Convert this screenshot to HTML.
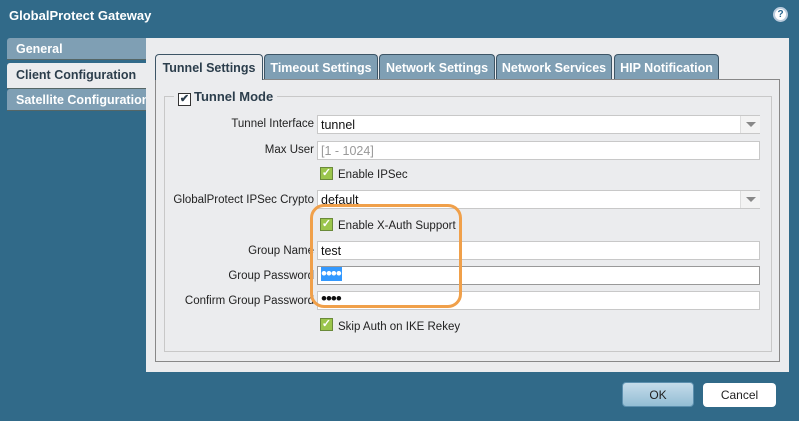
<html><head><style>
body{margin:0;width:799px;height:421px;background:#316a89;font-family:"Liberation Sans",sans-serif;position:relative;overflow:hidden;font-size:12px;white-space:nowrap}
.a{position:absolute}
.title{left:9px;top:8px;color:#fff;font-weight:bold;font-size:13px}
.side{left:7px;width:139px;height:22px;background:#7f9fb4;color:#fff;font-weight:bold;font-size:12.5px;line-height:22px;padding-left:9px;box-sizing:border-box;border-radius:3px 0 0 0;border-bottom:1px solid #566;overflow:hidden}
.tab{top:54px;height:25px;background:#7f9fb4;color:#fff;font-weight:bold;font-size:12.5px;line-height:26px;text-align:center;border:1px solid #3d5566;border-bottom:none;border-radius:4px 4px 0 0;box-sizing:border-box}
.lbl{right:485px;color:#222;font-size:11.5px;text-align:right}
.in{left:317px;width:443px;height:19px;background:#fff;border:1px solid #c8c8c8;box-sizing:border-box;padding-left:3px;line-height:18px;font-size:12.5px;color:#111}
.cb{width:13px;height:13px;background:#9bc54c;border:1px solid #6a8a3a;box-sizing:border-box;color:#fff;font-size:11px;line-height:11px;text-align:center;font-weight:bold}
.ct{color:#222;font-size:11.5px}
.dots{font-size:17px;line-height:14px;letter-spacing:-1px;display:inline-block;padding-right:1px}
</style></head><body>
<div class="a title">GlobalProtect Gateway</div>
<div class="a" style="left:773px;top:7px;width:15px;height:15px;border-radius:50%;background:#fff;border:2px solid #bcd;box-sizing:border-box;color:#2a6790;font-weight:bold;font-size:10px;text-align:center;line-height:11px">?</div>
<div class="a" style="left:146px;top:38px;width:643px;height:334px;background:#ebecee"></div>
<div class="a side" style="top:38px">General</div>
<div class="a side" style="top:63px;background:#ebecee;color:#2c3e4c;height:26px;line-height:24px">Client Configuration</div>
<div class="a side" style="top:89px">Satellite Configuration</div>
<div class="a" style="left:155px;top:79px;width:625px;height:283px;border:1px solid #888;background:#ebecee;box-sizing:border-box"></div>
<div class="a tab" style="left:155px;width:108px;background:#ebecee;color:#2c3e4c;height:26px">Tunnel Settings</div>
<div class="a tab" style="left:264px;width:114px">Timeout Settings</div>
<div class="a tab" style="left:379px;width:116px">Network Settings</div>
<div class="a tab" style="left:496px;width:116px">Network Services</div>
<div class="a tab" style="left:614px;width:105px">HIP Notification</div>
<div class="a" style="left:164px;top:96px;width:608px;height:256px;border:1px solid #c8c8c8;box-sizing:border-box"></div>
<div class="a" style="left:174px;top:88px;background:#ebecee;padding:0 4px;font-weight:bold;font-size:13px;color:#2c3e4c;line-height:17px"><span style="display:inline-block;width:11px;height:11px;border:1px solid #333;background:#fff;font-size:11px;line-height:10px;text-align:center;vertical-align:-1px;margin-right:3px">✔</span>Tunnel Mode</div>
<div class="a lbl" style="top:118px">Tunnel Interface</div>
<div class="a in" style="top:115px">tunnel</div>
<div class="a" style="left:740px;top:116px;width:19px;height:17px;background:#f3f3f3;border-left:1px solid #ddd"><div style="margin:6px 0 0 5px;width:0;height:0;border-left:5px solid transparent;border-right:5px solid transparent;border-top:5px solid #888"></div></div>
<div class="a lbl" style="top:144px">Max User</div>
<div class="a in" style="top:141px;color:#999">[1 - 1024]</div>
<div class="a cb" style="left:320px;top:167px">✓</div><div class="a ct" style="left:338px;top:169px">Enable IPSec</div>
<div class="a lbl" style="top:194px">GlobalProtect IPSec Crypto</div>
<div class="a in" style="top:190px">default</div>
<div class="a" style="left:740px;top:191px;width:19px;height:17px;background:#f3f3f3;border-left:1px solid #ddd"><div style="margin:6px 0 0 5px;width:0;height:0;border-left:5px solid transparent;border-right:5px solid transparent;border-top:5px solid #888"></div></div>
<div class="a cb" style="left:320px;top:218px">✓</div><div class="a ct" style="left:338px;top:220px">Enable X-Auth Support</div>
<div class="a lbl" style="top:245px">Group Name</div>
<div class="a in" style="top:241px">test</div>
<div class="a lbl" style="top:270px">Group Password</div>
<div class="a in" style="top:266px;border-color:#999"><span class="dots" style="background:#3399ff;color:#fff">••••</span></div>
<div class="a lbl" style="top:295px">Confirm Group Password</div>
<div class="a in" style="top:291px"><span class="dots">••••</span></div>
<div class="a cb" style="left:320px;top:318px">✓</div><div class="a ct" style="left:338px;top:321px">Skip Auth on IKE Rekey</div>
<div class="a" style="left:310px;top:204px;width:152px;height:104px;border:3px solid #f0a04a;border-radius:14px;box-sizing:border-box"></div>
<div class="a" style="left:622px;top:382px;width:72px;height:25px;background:linear-gradient(#c5dcea,#93bdd4);border:1px solid #5b8fae;border-radius:4px;box-sizing:border-box;text-align:center;line-height:24px;color:#222">OK</div>
<div class="a" style="left:703px;top:383px;width:73px;height:24px;background:#fff;border-radius:4px;text-align:center;line-height:25px;color:#222">Cancel</div>
</body></html>
